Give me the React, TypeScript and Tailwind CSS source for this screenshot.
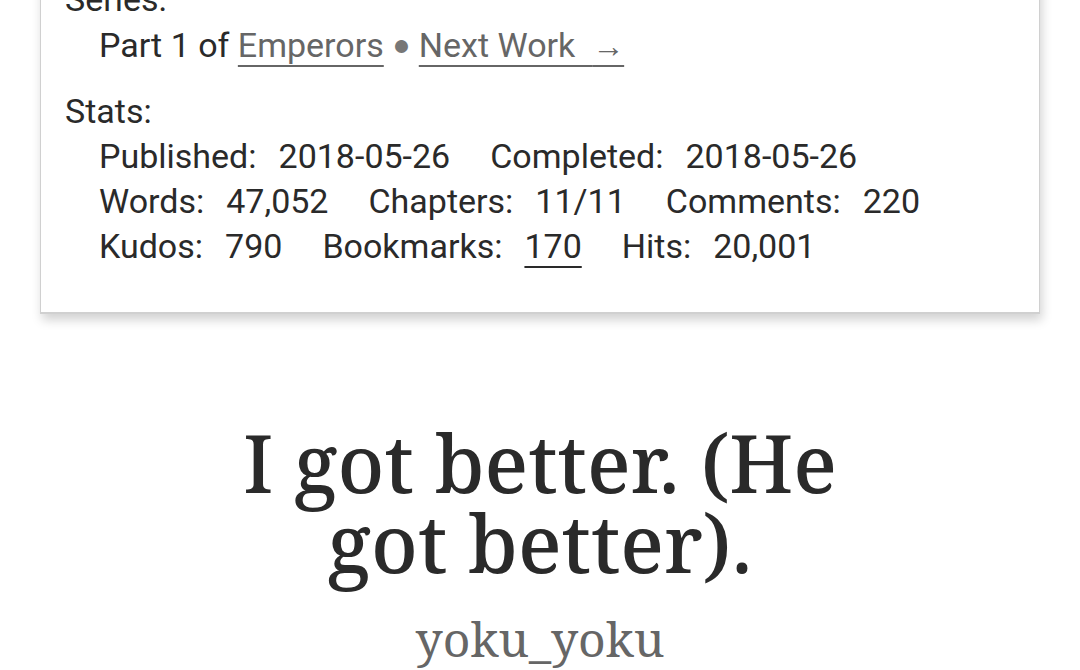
const stats = [
    [
        {label: "Published:", value: "2018-05-26"},
        {label: "Completed:", value: "2018-05-26"},
    ],
    [
        {label: "Words:", value: "47,052"},
        {label: "Chapters:", value: "11/11"},
        {label: "Comments:", value: "220"},
    ],
    [
        {label: "Kudos:", value: "790"},
        {label: "Bookmarks:", value: "170", link: true},
        {label: "Hits:", value: "20,001"},
    ],
];

const App = () => {
    return (
        <div className="min-h-screen bg-white text-[#2a2a2a] overflow-hidden">
            <div className="mx-[40px] mt-[-24px] border border-[#d0d0d0] border-b-2 bg-white px-[24px] pb-[43px] shadow-[2px_6px_10px_rgba(0,0,0,0.18)] font-['Roboto',sans-serif] text-[34px] leading-[45px]">
                <div>Series:</div>
                <div className="pl-[34px]">
                    Part 1 of{" "}
                    <a className="text-[#666] underline decoration-2 underline-offset-[8px]">Emperors</a>
                    {" "}<span className="text-[#777] text-[30px] align-[2px]">●</span>{" "}
                    <a className="text-[#666] underline decoration-2 underline-offset-[8px]">
                        Next Work&nbsp; <span className="text-[32px]">→</span>
                    </a>
                </div>
                <div className="mt-[20px]">Stats:</div>
                <div className="pl-[34px]">
                    {stats.map((row, i) => (
                        <div key={i} className="flex gap-[40px]">
                            {row.map(s => (
                                <div key={s.label} className="flex gap-[22px]">
                                    <span>{s.label}</span>
                                    <span className={s.link ? "underline decoration-2 underline-offset-[8px]" : ""}>{s.value}</span>
                                </div>
                            ))}
                        </div>
                    ))}
                </div>
            </div>
            <div className="mt-[108px] text-center font-['Noto_Serif','DejaVu_Serif',serif]">
                <h2 className="mx-auto max-w-[640px] text-[80px] leading-[80px] font-medium text-[#2a2a2a]">I got better. (He got better).</h2>
                <div className="mt-[22px] text-[48px] leading-[69px] text-[#666]">yoku_yoku</div>
            </div>
        </div>
    );
};

export default App;
